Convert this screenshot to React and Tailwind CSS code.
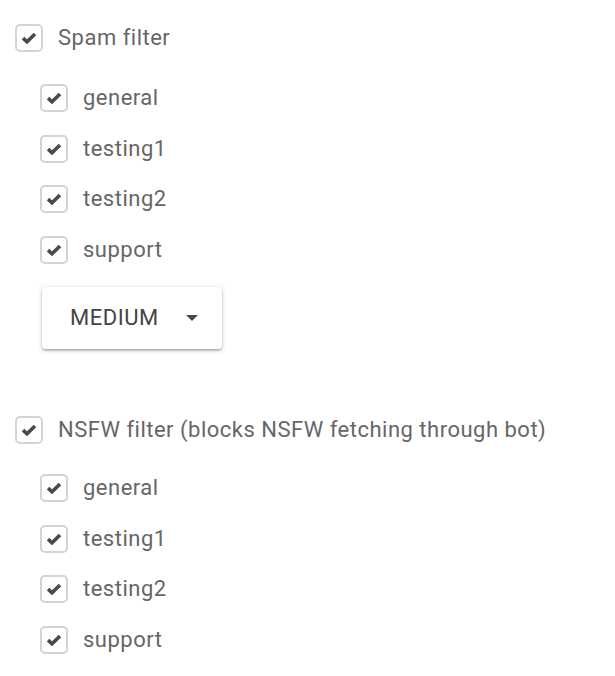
import React, { useState } from "react";

const channels = ["general", "testing1", "testing2", "support"];

const CheckBox = ({ checked, onChange }) => (
  <button
    type="button"
    onClick={onChange}
    className="flex h-[28px] w-[28px] shrink-0 items-center justify-center rounded-[5px] border-2 border-[#d4d4d4] bg-white"
  >
    {checked && (
      <svg width="16" height="12" viewBox="0 0 16 12">
        <path d="M2 6.2 L6 9.8 L14 2" fill="none" stroke="#4a4a4a" strokeWidth="3.6" />
      </svg>
    )}
  </button>
);

const Row = ({ label, checked, onChange, className }) => (
  <div className={`flex items-center gap-[15px] ${className}`}>
    <CheckBox checked={checked} onChange={onChange} />
    <span className="text-[22px] leading-none tracking-[0.5px] text-[#666666]">{label}</span>
  </div>
);

const FilterBlock = ({ title, children, rowsGap }) => {
  const [on, setOn] = useState(true);
  const [chans, setChans] = useState(channels.map(() => true));

  return (
    <div className="flex flex-col">
      <Row label={title} checked={on} onChange={() => setOn(!on)} className="h-[50px]" />
      <div className={`flex flex-col pl-[25px] ${rowsGap}`}>
        {channels.map((c, i) => (
          <Row
            key={c}
            label={c}
            checked={chans[i]}
            onChange={() => setChans(chans.map((v, j) => (j === i ? !v : v)))}
            className="h-[50.5px]"
          />
        ))}
      </div>
      {children}
    </div>
  );
};

export default function App() {
  return (
    <div className="min-h-screen bg-white pl-[15px] pt-[13px] font-['Roboto',sans-serif]">
      <FilterBlock title="Spam filter" rowsGap="mt-[10px]">
        <button
          type="button"
          className="ml-[27px] mt-[12px] flex h-[62px] w-[180px] items-center justify-between rounded-[4px] bg-white pl-[28px] pr-[24px] shadow-[0_2px_2px_0_rgba(0,0,0,0.14),0_3px_1px_-2px_rgba(0,0,0,0.12),0_1px_5px_0_rgba(0,0,0,0.2)]"
        >
          <span className="text-[22px] leading-none tracking-[0.5px] text-[#444444]">MEDIUM</span>
          <svg width="12" height="6" viewBox="0 0 12 6">
            <path d="M0 0 L12 0 L6 6 Z" fill="#4a4a4a" />
          </svg>
        </button>
      </FilterBlock>

      <div className="mt-[56px]">
        <FilterBlock title="NSFW filter (blocks NSFW fetching through bot)" rowsGap="mt-[8px]" />
      </div>
    </div>
  );
}
